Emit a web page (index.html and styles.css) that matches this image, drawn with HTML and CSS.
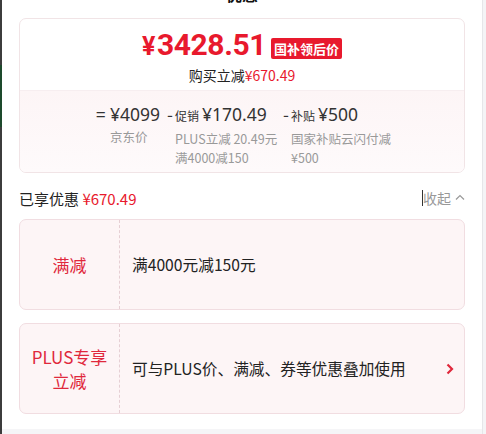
FILE: index.html
```html
<!DOCTYPE html>
<html lang="zh-CN">
<head>
<meta charset="utf-8">
<link rel="stylesheet" href="styles.css">
</head>
<body>
<div class="frame">
  <div class="edge-left"><div class="edge-green"></div></div>
  <div class="panel">
    <div class="title">优惠</div>
    <div class="summary">
      <div class="summary-top">
        <div class="price-row">
          <span class="price"><span class="yen">¥</span>3428.51</span>
          <span class="badge">国补领后价</span>
        </div>
        <div class="save">购买立减<span class="red">¥670.49</span></div>
      </div>
      <div class="summary-bottom">
        <div class="calc">
          <span class="op op-eq">=</span>
          <div class="item item-a">
            <div class="val">¥4099</div>
            <div class="desc">京东价</div>
          </div>
          <span class="op">-</span>
          <div class="item item-b">
            <div class="val"><span class="name">促销</span>¥170.49</div>
            <div class="desc">PLUS立减 20.49元<br>满4000减150</div>
          </div>
          <span class="op">-</span>
          <div class="item">
            <div class="val"><span class="name">补贴</span>¥500</div>
            <div class="desc">国家补贴云闪付减<br>¥500</div>
          </div>
        </div>
      </div>
    </div>
    <div class="enjoy">
      <div class="enjoy-left">已享优惠 <span class="red">¥670.49</span></div>
      <div class="collapse"><span class="caret"></span>收起 <svg class="up" width="10" height="6" viewBox="0 0 10 6"><path d="M1 5.5 L5 1.5 L9 5.5" fill="none" stroke="#999" stroke-width="1.2"/></svg></div>
    </div>
    <div class="promo">
      <div class="promo-tag">满减</div>
      <div class="promo-text">满4000元减150元</div>
    </div>
    <div class="promo">
      <div class="promo-tag">PLUS专享<br>立减</div>
      <div class="promo-text">可与PLUS价、满减、券等优惠叠加使用</div>
      <svg class="chev" width="8" height="12" viewBox="0 0 8 12"><path d="M1.5 1.5 L6 6 L1.5 10.5" fill="none" stroke="#e0283c" stroke-width="2.2"/></svg>
    </div>
    <div class="bottom-strip"></div>
  </div>
  <div class="edge-right"></div>
</div>
</body>
</html>
```
FILE: styles.css
```css
* { box-sizing: border-box; }
html, body { margin: 0; padding: 0; background: #fff; }
body {
  font-family: "Noto Sans CJK SC", "Noto Sans", sans-serif;
  color: #222;
  width: 486px;
  height: 434px;
  overflow: hidden;
}
.frame { display: flex; height: 434px; }
.edge-left { width: 2px; background: #3c3c3c; padding-top: 65px; }
.edge-green { height: 62px; background: #1d4a2c; }
.edge-right { width: 4px; background: #f4f4f6; border-left: 1px solid #e6e6e9; }
.panel {
  width: 480px;
  padding: 0 17px;
  display: flex;
  flex-direction: column;
  position: relative;
}
.title {
  text-align: center;
  font-size: 16px;
  font-weight: 700;
  line-height: 20px;
  height: 20px;
  margin-top: -16px;
  margin-bottom: 14px;
  color: #111;
}
.summary {
  border: 1px solid #f1e4e6;
  border-radius: 7px;
  overflow: hidden;
}
.summary-top {
  height: 72px;
  padding-top: 9px;
  text-align: center;
  border-bottom: 1px solid #f7eef0;
}
.price-row { display: flex; justify-content: center; align-items: center; gap: 5px; height: 36px; }
.price {
  font-family: "Roboto", "Noto Sans", sans-serif;
  font-weight: 700;
  font-size: 30px;
  color: #e8192d;
  letter-spacing: -0.4px;
  line-height: 36px;
}
.price .yen { font-size: 25px; margin-right: 2px; }
.badge {
  background: #e8192d;
  color: #fff;
  font-size: 13px;
  font-weight: 700;
  line-height: 21px;
  padding: 0 3px;
  border-radius: 2px;
  margin-top: 4px;
}
.save { font-size: 14px; line-height: 20px; margin-top: 1px; }
.red { color: #e8192d; }
.summary-bottom {
  height: 81px;
  background: linear-gradient(#fdf5f6, #fefafb);
  padding-top: 12px;
}
.calc {
  display: flex;
  padding-left: 76px;
}
.op {
  font-size: 17px;
  color: #333;
  line-height: 22px;
  width: 8px;
  flex: none;
}
.op-eq { width: 14px; }
.item { display: flex; flex-direction: column; }
.item-a { width: 57px; }
.item-b { width: 108px; }
.val {
  font-family: "Noto Sans", sans-serif;
  font-size: 17.5px;
  color: #333;
  line-height: 22px;
  white-space: nowrap;
}
.name {
  font-family: "Noto Sans CJK SC", sans-serif;
  font-size: 12px;
  margin-right: 3px;
}
.desc {
  font-size: 12.5px;
  color: #999;
  line-height: 19px;
  margin-top: 2px;
  white-space: nowrap;
}
.enjoy {
  display: flex;
  justify-content: space-between;
  align-items: center;
  height: 24px;
  margin-top: 13px;
  margin-bottom: 9px;
}
.enjoy-left { font-size: 15px; }
.collapse { font-size: 14px; color: #999; display: flex; align-items: center; gap: 4px; }
.caret { width: 1px; height: 16px; background: #333; margin-right: -4px; }
.up { margin-top: -2px; }
.promo {
  display: flex;
  align-items: center;
  height: 91px;
  background: #fdf5f6;
  border: 1px solid #f1dde1;
  border-radius: 7px;
  margin-bottom: 13px;
  position: relative;
}
.promo-tag {
  width: 100px;
  height: 100%;
  border-right: 1px dashed #e6cfd4;
  display: flex;
  align-items: center;
  justify-content: center;
  text-align: center;
  color: #e0283c;
  font-size: 17px;
  line-height: 24px;
}
.promo-text { font-size: 15.7px; padding-left: 12px; flex: 1; }
.chev { margin-right: 10px; }
.bottom-strip {
  position: absolute;
  left: 0; right: 0; bottom: 0;
  height: 5px;
  background: #f5f5f7;
}
```
